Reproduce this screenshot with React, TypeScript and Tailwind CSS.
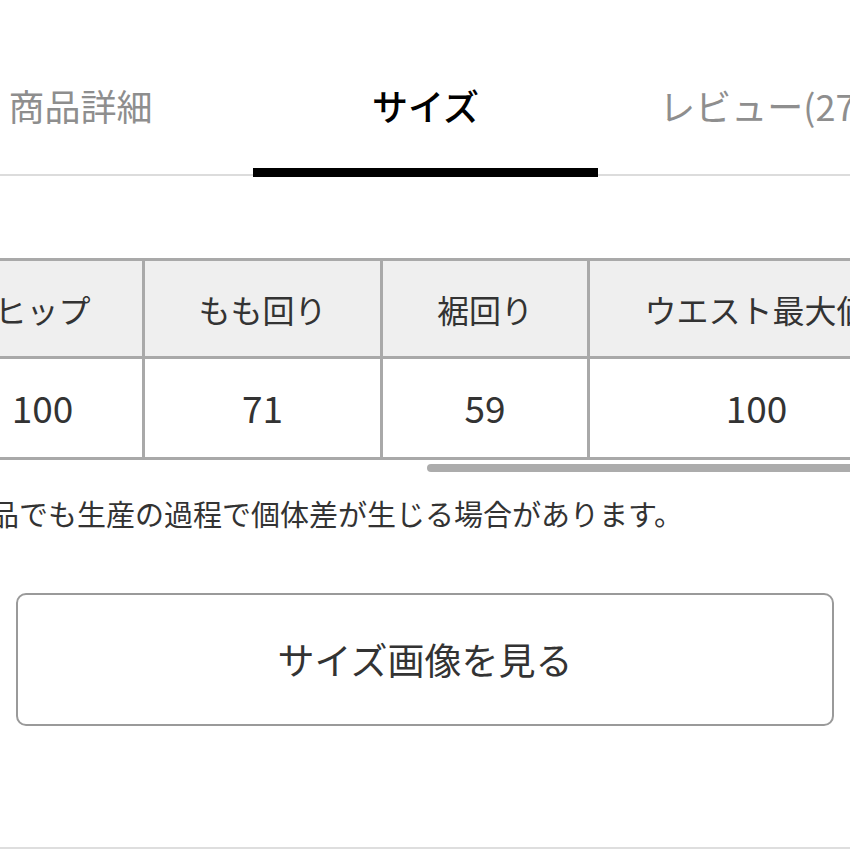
import React from "react";

const font = { fontFamily: '"Noto Sans CJK JP", "Noto Sans", sans-serif' };

export default function App() {
  const cols = [
    { w: "w-[202px]", h: "ヒップ", v: "100" },
    { w: "w-[238px]", h: "もも回り", v: "71" },
    { w: "w-[207px]", h: "裾回り", v: "59" },
    { w: "w-[336px]", h: "ウエスト最大値", v: "100" },
    { w: "w-[220px]", h: "股上", v: "30" },
  ];
  return (
    <div className="w-[850px] h-[850px] overflow-hidden bg-white font-['Noto_Sans_CJK_JP',sans-serif]" style={font}>
      {/* tabs */}
      <div className="ml-[-92px] w-[1035px] grid grid-cols-3 h-[177px]">
        <div className="flex flex-col">
          <div className="pt-[87px] h-[168px] text-center text-[36px] leading-[36px] text-[#8e8e8e] whitespace-nowrap">商品詳細</div>
          <div className="h-[9px] flex flex-col justify-end"><div className="h-[2px] mb-[1px] bg-[#dcdcdc]" /></div>
        </div>
        <div className="flex flex-col">
          <div className="pt-[87px] h-[168px] text-center text-[36px] leading-[36px] text-black font-medium whitespace-nowrap">サイズ</div>
          <div className="h-[9px] bg-black" />
        </div>
        <div className="flex flex-col">
          <div className="pt-[87px] h-[168px] pr-[14px] text-center text-[36px] leading-[36px] text-[#8e8e8e] whitespace-nowrap">レビュー(27)</div>
          <div className="h-[9px] flex flex-col justify-end"><div className="h-[2px] mb-[1px] bg-[#dcdcdc]" /></div>
        </div>
      </div>

      {/* table */}
      <div className="mt-[81px] ml-[-60px] w-[910px] overflow-hidden">
        <div className="flex w-max border-t-[3px] border-l-[3px] border-[#a9a9a9]">
          {cols.map((c, i) => (
            <div key={i} className={`${c.w} shrink-0 flex flex-col`}>
              <div className="h-[98px] bg-[#efefef] border-r-[3px] border-b-[3px] border-[#a9a9a9] flex items-center justify-center text-[32px] text-[#333] whitespace-nowrap">
                {c.h}
              </div>
              <div className="h-[101px] bg-white border-r-[3px] border-b-[3px] border-[#a9a9a9] flex items-center justify-center text-[37px] text-[#333]">
                {c.v}
              </div>
            </div>
          ))}
        </div>
      </div>
      <div className="mt-[4px] ml-[427px] w-[500px] h-[8px] rounded-full bg-[#acacac]" />

      {/* note */}
      <div className="mt-[27px] ml-[-39px] whitespace-nowrap text-[29px] leading-[29px] text-[#333]">
        商品でも生産の過程で個体差が生じる場合があります。
      </div>

      {/* button */}
      <div className="mt-[65px] mx-[16px] h-[133px] rounded-[10px] border-2 border-[#9a9a9a] flex items-center justify-center text-[37px] text-[#333]">
        サイズ画像を見る
      </div>

      <div className="mt-[121px] h-[2px] bg-[#dedede]" />
    </div>
  );
}
